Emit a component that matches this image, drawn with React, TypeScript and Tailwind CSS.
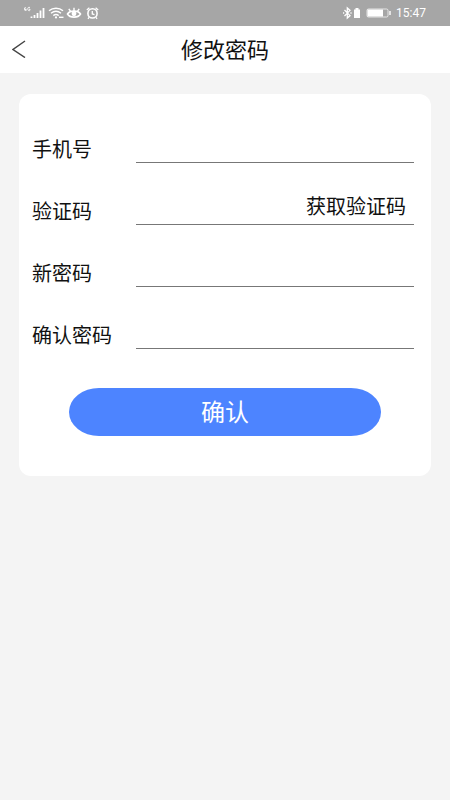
import { useState } from "react";

const fields = [
  { id: "phone", label: "手机号", type: "tel" },
  { id: "code", label: "验证码", type: "text", action: "获取验证码" },
  { id: "new-password", label: "新密码", type: "password" },
  { id: "confirm-password", label: "确认密码", type: "password" },
];

function SignalIcons() {
  return (
    <svg width="78" height="14" viewBox="1 0 78 14" fill="none" stroke="#fff">
      {/* 4G mark */}
      <path d="M2.5 1L0.8 3.8H3.6M2.8 2.5V5M7 1.6C5.6 0.6 4.6 1.8 4.8 3.2C5 5 6.6 5 7 4.2V3.2H6" strokeWidth="0.9" />
      {/* Signal bars */}
      <path d="M8.5 10.5V12M11.5 9V12M14.5 7V12M17.5 4.5V12M20.5 2V12" strokeWidth="1.8" />
      {/* Wi-Fi */}
      <path d="M26 4.8C30 1.4 36 1.4 40 4.8M28 7.3C31 4.9 35 4.9 38 7.3M30.3 9.6C32 8.2 34 8.2 35.7 9.6" strokeWidth="1.4" />
      <circle cx="33" cy="11.4" r="1.1" fill="#fff" stroke="none" />
      <path d="M36 11.3H40.5" strokeWidth="1.4" />
      {/* Eye comfort */}
      <path d="M44.5 8C47 4.2 55 4.2 57.5 8C55 12.2 47 12.2 44.5 8Z" strokeWidth="1.6" />
      <circle cx="51" cy="7.8" r="2.4" fill="#fff" stroke="none" />
      <path d="M51 1.8V5M45.8 2.8L47.6 5.4M56.2 2.8L54.4 5.4" strokeWidth="1.4" />
      {/* Alarm */}
      <circle cx="69.5" cy="7.4" r="4.6" strokeWidth="1.6" />
      <path d="M63.8 4L66.4 1.8M75.2 4L72.6 1.8M69.3 5V8L71.5 8.6M66 11.4L65 12.8M73 11.4L74 12.8" strokeWidth="1.3" />
    </svg>
  );
}

function BatteryIcons() {
  return (
    <svg width="50" height="14" viewBox="0 0 50 14" fill="none" stroke="#fff">
      {/* Bluetooth */}
      <path d="M2.5 4L8 9.6L5.3 12V2L8 4.4L2.5 10" strokeWidth="1.3" />
      <path d="M1 7H2.2M8.4 7H9.6" strokeWidth="1.5" />
      <path d="M12 3.5H13.5V2H16.5V3.5H18V12H12Z" fill="#fff" stroke="none" />
      {/* Battery */}
      <rect x="25" y="3" width="21" height="8" rx="1.5" strokeWidth="0.7" />
      <rect x="25.5" y="3.5" width="15.5" height="7" fill="#fff" stroke="none" />
      <path d="M48 5V9" strokeWidth="1.4" />
    </svg>
  );
}

export default function App() {
  const [values, setValues] = useState<Record<string, string>>({});

  return (
    <div className="min-h-screen bg-[#f4f4f4] font-['Noto_Sans','Noto_Sans_CJK_SC',sans-serif] text-[#111111]">
      {/* Status bar */}
      <div className="flex h-[26px] items-center justify-between bg-[#a6a6a6] px-6 text-white">
        <SignalIcons />
        <div className="flex items-center gap-1">
          <BatteryIcons />
          <span className="font-['Roboto',sans-serif] text-xs">15:47</span>
        </div>
      </div>

      {/* Header */}
      <header className="grid h-[47px] grid-cols-[48px_1fr_48px] items-center bg-white pb-[2px]">
        <button type="button" aria-label="返回" className="flex h-full items-center pl-3">
          <svg width="14" height="18" viewBox="0 0 14 18" fill="none" stroke="#444" strokeWidth="1.5">
            <path d="M13 1L1 9.5L13 17.5" />
          </svg>
        </button>
        <h1 className="text-center text-[22px] leading-8">修改密码</h1>
      </header>

      <main className="px-[19px] pt-[21px]">
        <form
          className="rounded-xl bg-white pb-10 pt-[7px]"
          onSubmit={(e) => e.preventDefault()}
        >
          <div className="pl-[13px] pr-[17px]">
            {fields.map((f) => (
              <div key={f.id} className="flex h-[62px] items-end">
                <label htmlFor={f.id} className="w-[104px] shrink-0 text-xl leading-[26px]">
                  {f.label}
                </label>
                <div className="flex flex-1 items-end border-b border-[#777777]">
                  <input
                    id={f.id}
                    type={f.type}
                    value={values[f.id] ?? ""}
                    onChange={(e) => setValues({ ...values, [f.id]: e.target.value })}
                    className="h-8 min-w-0 flex-1 text-base outline-none"
                  />
                  {f.action && (
                    <button type="button" className="shrink-0 pb-1 pr-2 text-xl leading-[26px]">
                      {f.action}
                    </button>
                  )}
                </div>
              </div>
            ))}
          </div>

          <div className="px-[50px] pt-[39px]">
            <button
              type="submit"
              className="h-12 w-full rounded-[30px/24px] bg-[#4d84ff] text-2xl text-white"
            >
              确认
            </button>
          </div>
        </form>
      </main>
    </div>
  );
}
